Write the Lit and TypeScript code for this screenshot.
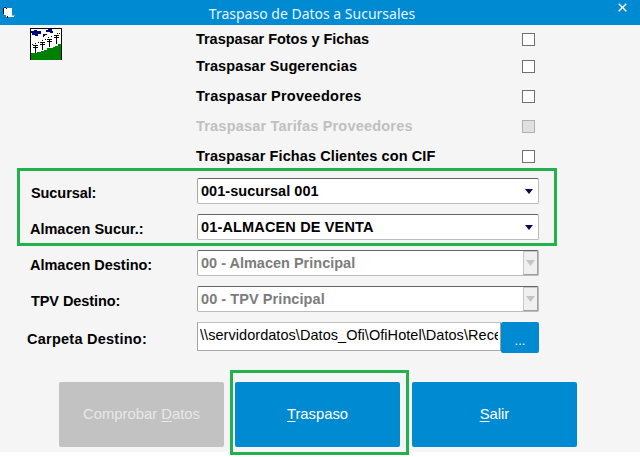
import { LitElement, html, css, svg } from "lit";
import { customElement } from "lit/decorators.js";

const FONT = css`"Liberation Sans", Arial, sans-serif`;

@customElement("app-root")
export class AppRoot extends LitElement {
  static styles = css`
    :host { display: block; width: 640px; height: 457px; background: #fff; font-family: ${FONT}; overflow: hidden; position: relative; }
    * { box-sizing: border-box; }
    .window { height: 452px; background: #f5f5f5; display: flex; flex-direction: column; }
    .titlebar { height: 25px; background: #008ad2; flex: none; display: flex; align-items: center; justify-content: space-between; color: #fff; font-family: "Noto Sans", "Open Sans", sans-serif; padding: 0 13px 0 3px; }
    .titlebar .title { font-size: 14px; position: absolute; left: 0; width: 624px; text-align: center; top: 5px; line-height: 18px; color: #e6f6ff; }
    .appicon { width: 12px; height: 12px; display: block; }
    .close { width: 9px; height: 9px; display: block; margin-bottom: 10px; }
    .top { display: flex; flex: none; height: 146px; padding-left: 30px; }
    .logo { width: 32px; height: 32px; flex: none; margin-top: 3px; display: block; }
    .checks { margin-left: 134px; width: 342px; display: flex; flex-direction: column; padding-top: 1px; gap: 3px; }
    .check { height: 27px; display: flex; align-items: center; justify-content: space-between; padding-right: 3px; font-size: 14.5px; font-weight: 700; color: #000; }
    .check:nth-child(2) { margin-top: -3px; }
    .check span { margin-top: -1px; }
    .check.off span { color: #c0c0c0; }
    .box { width: 13px; height: 13px; border: 1px solid #707070; background: #fff; display: block; }
    .check.off .box { background: #e0e0e0; border-color: #b0b0b0; }
    .form { display: grid; grid-template-columns: 197px 342px; row-gap: 10px; margin-top: 7px; flex: none; }
    .lab { font-size: 14.5px; font-weight: 700; color: #000; display: flex; align-items: center; padding-top: 3px; }
    .l30 { padding-left: 30px; } .l31 { padding-left: 31px; } .l27 { padding-left: 27px; }
    .combo { height: 26px; background: #fff; border: 1px solid; border-color: #646464 #bbb #bbb #a8a8a8; border-radius: 2px; display: flex; align-items: center; font-size: 14.5px; font-weight: 700; color: #000; padding-left: 3px; padding-bottom: 1px; justify-content: space-between; }
    .combo.dis { color: #7c7c7c; padding-right: 0; }
    .arrow { width: 8px; height: 5px; display: block; margin-right: 5px; margin-top: 2px; }
    .drop { width: 15px; height: 24px; background: #f0f0f0; border: 1px solid; border-color: #c8c8c8 #a0a0a0 #a0a0a0 #c8c8c8; display: flex; align-items: center; justify-content: center; margin-bottom: -1px; }
    .drop svg { width: 9px; height: 6px; display: block; }
    .pathrow { display: flex; height: 31px; align-items: flex-start; }
    .path { width: 304px; height: 29px; border: 1px solid; border-color: #c0c0c0 #a0a0a0 #a8a8a8 #a0a0a0; background: #fff; font-size: 14.5px; letter-spacing: 0.05px; color: #000; padding: 0 2px 3px 2px; white-space: nowrap; overflow: hidden; display: flex; align-items: center; }
    .path span { overflow: hidden; display: block; }
    .dots { width: 38px; height: 31px; background: #008ad2; color: #fff; border: 0; border-radius: 2px; font: 13px ${FONT}; padding: 6px 0 0; }
    .buttons { display: flex; margin: 29px 0 0 59px; gap: 11px; flex: none; }
    .btn { width: 165px; height: 65px; border: 0; border-radius: 2px; background: #008ad2; color: #fff; font: 14.8px ${FONT}; padding: 0 0 1px; display: block; }
    .btn:last-child { margin-left: 1px; }
    .btn.dis { background: #c2c2c2; color: #e8e8e8; }
    .btn u { text-underline-offset: 2px; }
    .hl { position: absolute; border: 3px solid #22b14c; pointer-events: none; }
    .hl.a { left: 17px; top: 168px; width: 540px; height: 78px; }
    .hl.b { left: 230px; top: 370px; width: 179px; height: 85px; }
  `;

  private logo() {
    const posts = [[5, 17, 8], [12, 14, 8], [19, 11, 8], [26, 7, 9]];
    return html`<svg class="logo" viewBox="0 0 32 32" shape-rendering="crispEdges" aria-hidden="true">
      <rect width="32" height="32" fill="#000"/>
      <rect x="1" y="1" width="30" height="30" fill="#fff"/>
      <path d="M1 25h6v-1h4v-1h3v-1h3v-2h6v-1h2v-1h3v-2h3v17H1z" fill="#008000"/>
      <path d="M1 3h3V2h3v1h4v3H8v2H5V7H2V5H1zM13 6h4v1h-2v1h-1v1h-1zM16 2h2V1h4v2h1v2h-3v-1h-2V4h-2z" fill="#000080"/>
      ${posts.map(([x, y, h]) => svg`<path d="M${x - 2} ${y}h5v1h-5zM${x - 2} ${y + 2}h5v1h-5zM${x} ${y}h1v${h}h-1z" fill="#000"/>`)}
      <path d="M2 16h1v1H2zM5 15h1v1H5zM8 14h1v1H8zM12 12h1v1h-1zM15 11h1v1h-1zM18 9h1v1h-1zM21 8h1v1h-1zM24 7h1v1h-1zM27 5h1v1h-1zM29 5h1v1h-1z" fill="#000"/>
    </svg>`;
  }

  private spaced(label: string, ls: number) {
    return html`<span style="letter-spacing:${ls}px">${label}</span>`;
  }

  private check(label: string, ls: number, cls = "") {
    return html`<div class="check ${cls}">${this.spaced(label, ls)}<i class="box"></i></div>`;
  }

  private combo(label: string, ls: number) {
    return html`<div class="combo">${this.spaced(label, ls)}
      <svg class="arrow" viewBox="0 0 8 5" aria-hidden="true"><path d="M0 0h8L4 5z" fill="#0a0a50"/></svg></div>`;
  }

  private disabledCombo(label: string, ls: number) {
    return html`<div class="combo dis">${this.spaced(label, ls)}
      <div class="drop"><svg viewBox="0 0 9 6" aria-hidden="true"><path d="M0 0h9L4.5 6z" fill="#c4c4c4"/></svg></div></div>`;
  }

  render() {
    return html`
      <div class="window">
        <div class="titlebar">
          <svg class="appicon" viewBox="0 0 12 12" shape-rendering="crispEdges" aria-hidden="true">
            <path d="M1 1h8v7h2v2H3V8H1z" fill="#fff"/><path d="M0 1h1v6H0zM1 0h2v1H1zM3 1h1v1H3zM4 9h1v2H4z" fill="#000"/><path d="M9 8h3v1H9z" fill="#9ab"/>
          </svg>
          <span class="title">Traspaso de Datos a Sucursales</span>
          <svg class="close" viewBox="0 0 9 9" aria-hidden="true"><path d="M.7.7l7.6 7.6M8.3.7L.7 8.3" stroke="#fff" stroke-width="1.4" fill="none"/></svg>
        </div>
        <div class="top">
          ${this.logo()}
          <div class="checks">
            ${this.check("Traspasar Fotos y Fichas", -0.04)}
            ${this.check("Traspasar Sugerencias", 0.11)}
            ${this.check("Traspasar Proveedores", 0.25)}
            ${this.check("Traspasar Tarifas Proveedores", 0.2, "off")}
            ${this.check("Traspasar Fichas Clientes con CIF", 0.1)}
          </div>
        </div>
        <div class="form">
          <div class="lab l31">${this.spaced("Sucursal:", -0.08)}</div>${this.combo("001-sucursal 001", 0.05)}
          <div class="lab l30">${this.spaced("Almacen Sucur.:", -0.01)}</div>${this.combo("01-ALMACEN DE VENTA", 0.15)}
          <div class="lab l30">${this.spaced("Almacen Destino:", -0.02)}</div>${this.disabledCombo("00 - Almacen Principal", 0)}
          <div class="lab l31">${this.spaced("TPV Destino:", -0.08)}</div>${this.disabledCombo("00 - TPV Principal", 0.07)}
          <div class="lab l27">${this.spaced("Carpeta Destino:", 0.25)}</div>
          <div class="pathrow">
            <div class="path"><span>\\\\servidordatos\\Datos_Ofi\\OfiHotel\\Datos\\Rece</span></div>
            <button class="dots">...</button>
          </div>
        </div>
        <div class="buttons">
          <button class="btn dis">Comprobar <u>D</u>atos</button>
          <button class="btn"><u>T</u>raspaso</button>
          <button class="btn"><u>S</u>alir</button>
        </div>
      </div>
      <div class="hl a"></div>
      <div class="hl b"></div>
    `;
  }
}
